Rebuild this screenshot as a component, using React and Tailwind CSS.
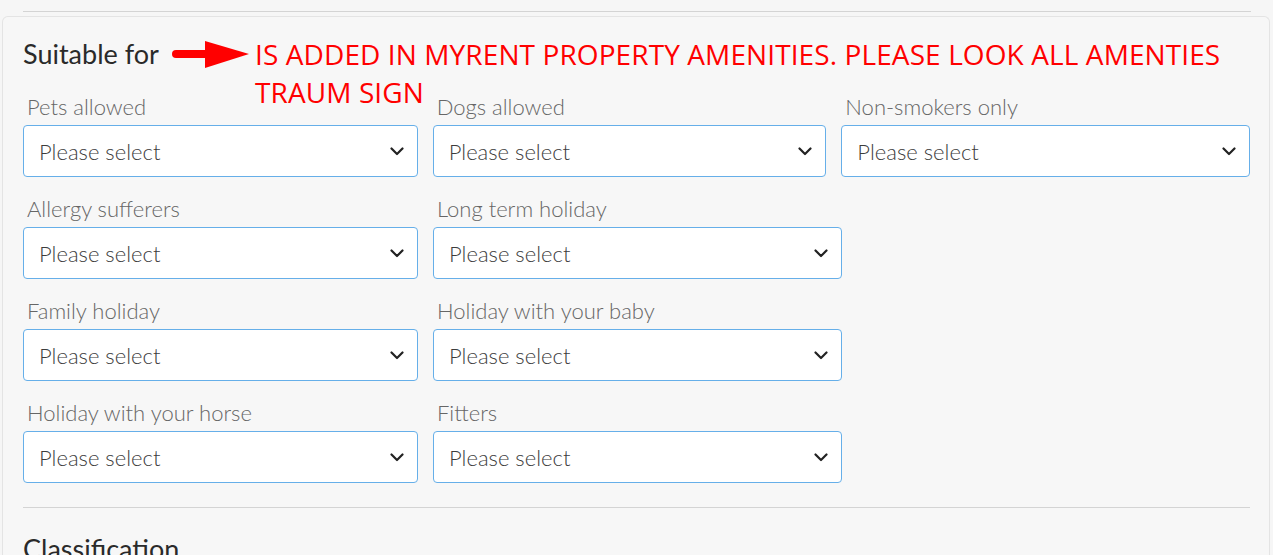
const rows = [
    [
        {label: 'Pets allowed', w: 'w-[395px]'},
        {label: 'Dogs allowed', w: 'w-[394px]'},
        {label: 'Non-smokers only', w: 'w-[409px]'},
    ],
    [
        {label: 'Allergy sufferers', w: 'w-[395px]'},
        {label: 'Long term holiday', w: 'w-[409px]'},
    ],
    [
        {label: 'Family holiday', w: 'w-[395px]'},
        {label: 'Holiday with your baby', w: 'w-[409px]'},
    ],
    [
        {label: 'Holiday with your horse', w: 'w-[395px]'},
        {label: 'Fitters', w: 'w-[409px]'},
    ],
]

function Chevron() {
    return (
        <svg width="14" height="9" viewBox="0 0 14 9" fill="none">
            <path d="M1.5 1.5 L7 7 L12.5 1.5" stroke="#222" strokeWidth="2.2" strokeLinecap="round" strokeLinejoin="round"/>
        </svg>
    )
}

function SelectField({label, w}) {
    return (
        <div className={`${w} flex flex-col`}>
            <label className="pl-1 font-['Lato_Light','Lato',sans-serif] text-[22px] font-light leading-[22px] text-[#666] h-[29px]">{label}</label>
            <div className="flex h-[52px] items-center justify-between rounded-[4px] border border-[#66afe9] bg-white pl-[15px] pr-[13px]">
                <span className="font-['Lato_Light','Lato',sans-serif] text-[22px] font-light text-[#3c3c3c]">Please select</span>
                <Chevron/>
            </div>
        </div>
    )
}

function Arrow() {
    return (
        <svg width="80" height="30" viewBox="0 0 80 30" className="shrink-0">
            <line x1="4" y1="15" x2="36" y2="15" stroke="#ff0000" strokeWidth="8" strokeLinecap="round"/>
            <polygon points="33,2 77,15 33,29" fill="#ff0000"/>
        </svg>
    )
}

export default function App() {
    return (
        <main className="min-h-screen bg-[#f6f6f6] font-['Lato',sans-serif] text-[#333] overflow-hidden">
            <div className="h-[11px]"/>
            <div className="mx-[23px] mr-[22px] border-t border-[#d4d4d4]"/>
            <div className="mt-[4px] ml-[2px] mr-[3px] rounded-t-[6px] border-x border-t border-[#e4e4e4] bg-[#f7f7f7] pl-[20px] pr-[19px]">
                <div className="flex items-start pt-[20px] h-[79px]">
                    <h2 className="text-[27px] leading-[34px] text-[#2a2a2a] w-[150px]">Suitable for</h2>
                    <div className="mt-[2px] -ml-[1px]"><Arrow/></div>
                    <p className="ml-[3px] -mt-[2px] text-[28px] leading-[38px] tracking-[0.1px] text-[#ff0000] font-['Open_Sans',sans-serif]">
                        IS ADDED IN MYRENT PROPERTY AMENITIES. PLEASE LOOK ALL AMENTIES<br/>TRAUM SIGN
                    </p>
                </div>
                <div className="flex flex-col gap-[21px]">
                    {rows.map((row, i) => (
                        <div key={i} className="flex gap-[15px]">
                            {row.map((f) => (
                                <SelectField key={f.label} {...f}/>
                            ))}
                        </div>
                    ))}
                </div>
                <div className="mt-[24px] border-t border-[#d4d4d4]"/>
                <h2 className="mt-[24px] text-[27px] leading-[34px] text-[#2a2a2a]">Classification</h2>
            </div>
        </main>
    )
}
